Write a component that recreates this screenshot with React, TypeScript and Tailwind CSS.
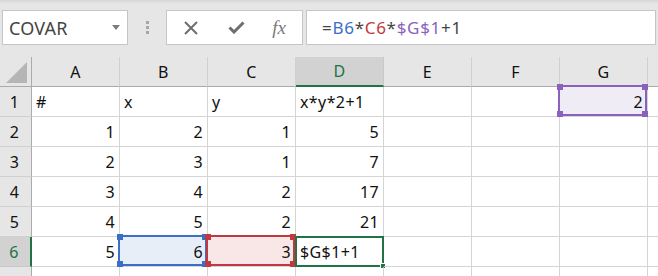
import React from 'react';

const cols = ['A', 'B', 'C', 'D', 'E', 'F', 'G', ''];

type Cell = { v?: string; align?: 'l' | 'r' };

const rows: Cell[][] = [
  [{ v: '#' }, { v: 'x' }, { v: 'y' }, { v: 'x*y*2+1' }, {}, {}, { v: '2', align: 'r' }, {}],
  [{ v: '1', align: 'r' }, { v: '2', align: 'r' }, { v: '1', align: 'r' }, { v: '5', align: 'r' }, {}, {}, {}, {}],
  [{ v: '2', align: 'r' }, { v: '3', align: 'r' }, { v: '1', align: 'r' }, { v: '7', align: 'r' }, {}, {}, {}, {}],
  [{ v: '3', align: 'r' }, { v: '4', align: 'r' }, { v: '2', align: 'r' }, { v: '17', align: 'r' }, {}, {}, {}, {}],
  [{ v: '4', align: 'r' }, { v: '5', align: 'r' }, { v: '2', align: 'r' }, { v: '21', align: 'r' }, {}, {}, {}, {}],
  [{ v: '5', align: 'r' }, { v: '6', align: 'r' }, { v: '3', align: 'r' }, { v: '$G$1+1' }, {}, {}, {}, {}],
  [{}, {}, {}, {}, {}, {}, {}, {}],
];

// reference highlight boxes, keyed by "row-col"
const highlights: Record<string, { border: string; fill: string; handle: string }> = {
  '6-1': { border: 'border-[#3b6fc6]', fill: 'bg-[#e8eef8]', handle: 'bg-[#3b6fc6]' },
  '6-2': { border: 'border-[#bf3a40]', fill: 'bg-[#f9e7e7]', handle: 'bg-[#bf3a40]' },
  '1-6': { border: 'border-[#8a62be]', fill: 'bg-[#efecf6]', handle: 'bg-[#8a62be]' },
};

const Handles: React.FC<{ color: string }> = ({ color }) => (
  <>
    <span className={`absolute -left-[3px] -top-[3px] w-[6px] h-[6px] ${color}`} />
    <span className={`absolute -right-[3px] -top-[3px] w-[6px] h-[6px] ${color}`} />
    <span className={`absolute -left-[3px] -bottom-[3px] w-[6px] h-[6px] ${color}`} />
    <span className={`absolute -right-[3px] -bottom-[3px] w-[6px] h-[6px] ${color}`} />
  </>
);

const Toolbar: React.FC = () => (
  <div className="relative h-[57px] bg-[#e6e6e6] flex items-start pt-[10px] pl-[2px]">
    <div className="absolute left-0 right-0 top-0 h-[4px] bg-gradient-to-b from-[#d6d6d6] to-[#e6e6e6]" />
    {/* Name box */}
    <div className="relative w-[126px] h-[35px] bg-white border border-[#c6c6c6] flex items-center pl-[6px] pr-[7px] justify-between">
      <span className="text-[18px] text-[#444] leading-none tracking-[0.2px]">COVAR</span>
      <svg width="8" height="5" viewBox="0 0 8 5">
        <path d="M0 0 H8 L4 5 Z" fill="#7d7d7d" />
      </svg>
    </div>
    {/* dots */}
    <div className="w-[38px] h-[35px] flex flex-col items-center justify-center gap-[2px]">
      <span className="w-[3px] h-[3px] bg-[#a6a6a6]" />
      <span className="w-[3px] h-[3px] bg-[#a6a6a6]" />
      <span className="w-[3px] h-[3px] bg-[#a6a6a6]" />
    </div>
    {/* cancel / enter / fx */}
    <div className="w-[137px] h-[35px] bg-white border border-[#c6c6c6] flex items-center">
      <div className="w-[46px] flex justify-center pl-[2px]">
        <svg width="14" height="14" viewBox="0 0 14 14">
          <path d="M1 1 L13 13 M13 1 L1 13" stroke="#6e6e6e" strokeWidth="2" />
        </svg>
      </div>
      <div className="w-[46px] flex justify-center">
        <svg width="17" height="13" viewBox="0 0 17 13">
          <path d="M1.5 6.5 L6 11 L15.5 1.5" stroke="#6e6e6e" strokeWidth="3" fill="none" />
        </svg>
      </div>
      <div className="w-[40px] flex justify-center">
        <span className="font-['Liberation_Serif',serif] italic text-[19px] text-[#7a7a7a] leading-none">fx</span>
      </div>
    </div>
    {/* formula input */}
    <div className="ml-[3px] flex-1 h-[35px] bg-white border border-[#c6c6c6] mr-[2px] flex items-center pl-[15px]">
      <span className="text-[17px] leading-none tracking-[0.7px]">
        <span className="text-[#444]">=</span>
        <span className="text-[#3b6fc6]">B6</span>
        <span className="text-[#444]">*</span>
        <span className="text-[#bf3a40]">C6</span>
        <span className="text-[#444]">*</span>
        <span className="text-[#8a62be]">$G$1</span>
        <span className="text-[#444]">+1</span>
      </span>
    </div>
  </div>
);

const Sheet: React.FC = () => (
  <div className="grid grid-cols-[32px_repeat(8,88px)] auto-rows-[30px] text-[16px] text-[#111] tracking-[0.4px]">
    {/* corner */}
    <div className="relative bg-[#e6e6e6] border-r border-b border-[#ababab]">
      <svg className="absolute right-[4px] bottom-[3px]" width="21" height="21" viewBox="0 0 21 21">
        <path d="M21 0 V21 H0 Z" fill="#b5b5b5" />
      </svg>
    </div>
    {cols.map((c, i) =>
      c === 'D' ? (
        <div
          key={i}
          className="bg-[#d2d2d2] border-r border-[#c8c8c8] border-b-2 border-b-[#217346] text-[#217346] flex items-center justify-center leading-none"
        >
          {c}
        </div>
      ) : (
        <div
          key={i}
          className="bg-[#e6e6e6] border-r border-[#d0d0d0] border-b border-b-[#ababab] flex items-center justify-center leading-none"
        >
          {c}
        </div>
      )
    )}
    {rows.map((row, ri) => {
      const r = ri + 1;
      return (
        <React.Fragment key={r}>
          {r === 6 ? (
            <div className="bg-[#d2d2d2] border-r-2 border-r-[#217346] border-b border-[#c8c8c8] text-[#217346] flex items-center justify-center leading-none pr-[2px]">
              {r}
            </div>
          ) : (
            <div className="bg-[#e6e6e6] border-r border-r-[#ababab] border-b border-[#d0d0d0] flex items-center justify-center leading-none pr-[2px]">
              {r < 7 ? r : ''}
            </div>
          )}
          {row.map((cell, ci) => {
            const hl = highlights[`${r}-${ci}`];
            const active = r === 6 && ci === 3;
            return (
              <div
                key={ci}
                className={`relative border-r border-b border-[#d4d4d4] flex items-center leading-none ${
                  cell.align === 'r' ? 'justify-end pr-[4px]' : 'justify-start pl-[4px]'
                } ${hl ? hl.fill : ''}`}
              >
                {hl && (
                  <div className={`absolute -left-[2px] -top-[2px] right-0 bottom-0 border-2 ${hl.border}`}>
                    <Handles color={hl.handle} />
                  </div>
                )}
                {active && (
                  <div className="absolute -left-[1px] -top-[1px] -right-[1px] -bottom-[1px] border-2 border-[#217346]">
                    <span className="absolute -right-[4px] -bottom-[4px] w-[6px] h-[6px] bg-[#217346] border border-white" />
                  </div>
                )}
                <span className="relative">{cell.v}</span>
              </div>
            );
          })}
        </React.Fragment>
      );
    })}
  </div>
);

export default function App() {
  return (
    <div className="w-[658px] h-[276px] overflow-hidden bg-white font-['Noto_Sans',sans-serif]">
      <Toolbar />
      <Sheet />
    </div>
  );
}
